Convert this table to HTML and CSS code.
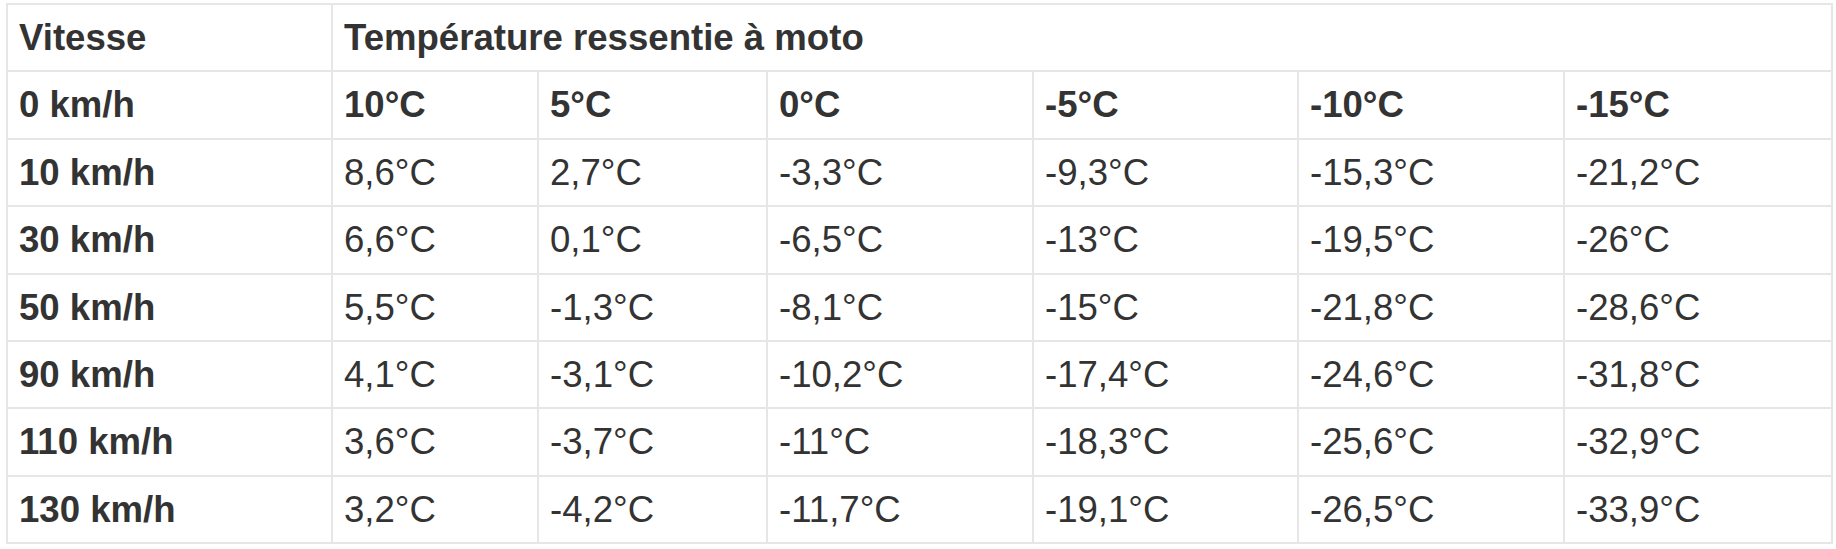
FILE: index.html
```html
<!DOCTYPE html>
<html lang="fr">
<head>
<meta charset="utf-8">
<title>Température ressentie à moto</title>
<link rel="stylesheet" href="styles.css">
</head>
<body>
<table class="wind">
  <colgroup>
    <col class="c1"><col class="c2"><col class="c3"><col class="c4"><col class="c5"><col class="c6"><col class="c7">
  </colgroup>
  <tbody>
    <tr><th>Vitesse</th><th colspan="6">Température ressentie à moto</th></tr>
    <tr><th>0 km/h</th><th>10°C</th><th>5°C</th><th>0°C</th><th>-5°C</th><th>-10°C</th><th>-15°C</th></tr>
    <tr><th>10 km/h</th><td>8,6°C</td><td>2,7°C</td><td>-3,3°C</td><td>-9,3°C</td><td>-15,3°C</td><td>-21,2°C</td></tr>
    <tr><th>30 km/h</th><td>6,6°C</td><td>0,1°C</td><td>-6,5°C</td><td>-13°C</td><td>-19,5°C</td><td>-26°C</td></tr>
    <tr><th>50 km/h</th><td>5,5°C</td><td>-1,3°C</td><td>-8,1°C</td><td>-15°C</td><td>-21,8°C</td><td>-28,6°C</td></tr>
    <tr><th>90 km/h</th><td>4,1°C</td><td>-3,1°C</td><td>-10,2°C</td><td>-17,4°C</td><td>-24,6°C</td><td>-31,8°C</td></tr>
    <tr><th>110 km/h</th><td>3,6°C</td><td>-3,7°C</td><td>-11°C</td><td>-18,3°C</td><td>-25,6°C</td><td>-32,9°C</td></tr>
    <tr><th>130 km/h</th><td>3,2°C</td><td>-4,2°C</td><td>-11,7°C</td><td>-19,1°C</td><td>-26,5°C</td><td>-33,9°C</td></tr>
  </tbody>
</table>
</body>
</html>
```

FILE: styles.css
```css
html, body {
  margin: 0;
  padding: 0;
  background: #ffffff;
}
body {
  font-family: "Liberation Sans", Arial, sans-serif;
  color: #333333;
}
.wind {
  border-collapse: collapse;
  table-layout: fixed;
  width: 1825px;
  margin: 3px 0 0 6px;
  font-size: 36.6px;
}
.wind .c1 { width: 325px; }
.wind .c2 { width: 206px; }
.wind .c3 { width: 229px; }
.wind .c4 { width: 266px; }
.wind .c5 { width: 265px; }
.wind .c6 { width: 266px; }
.wind .c7 { width: 268px; }
.wind th,
.wind td {
  border: 2px solid #e6e6e6;
  padding: 11px 10px 11px 11px;
  line-height: 43.4px;
  text-align: left;
  vertical-align: middle;
  white-space: nowrap;
}
.wind th { font-weight: bold; }
.wind td { font-weight: normal; }
```
